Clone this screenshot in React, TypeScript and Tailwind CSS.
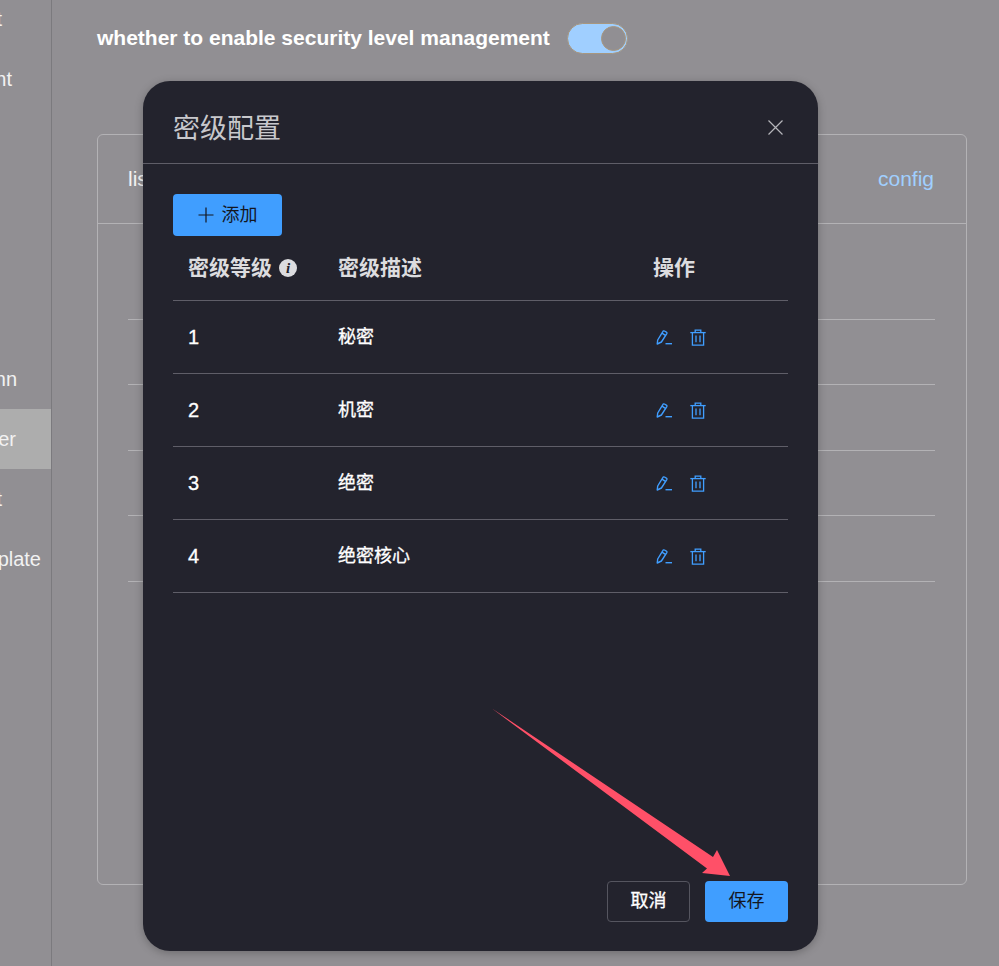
const FONT = "font-['Liberation_Sans','Noto_Sans_CJK_SC',sans-serif]";

const sideItems = [
  { label: "Project list", right: 49, active: false },
  { label: "Agent management", right: 39, active: false },
  { label: "", right: 0, active: false },
  { label: "", right: 0, active: false },
  { label: "", right: 0, active: false },
  { label: "", right: 0, active: false },
  { label: "Data conn", right: 34, active: false },
  { label: "Cipher", right: 35, active: true },
  { label: "Audit", right: 49, active: false },
  { label: "Template", right: 10, active: false },
];

const levels = [
  { level: "1", desc: "秘密" },
  { level: "2", desc: "机密" },
  { level: "3", desc: "绝密" },
  { level: "4", desc: "绝密核心" },
];

function EditIcon() {
  return (
    <svg width="16" height="16" viewBox="0 0 16 16" fill="none" stroke="#409eff" strokeWidth="1.4">
      <path d="M1.2 15 1.7 11 7 2.4a1 1 0 0 1 1.4-.4l2 1.2a1 1 0 0 1 .4 1.4L5.4 13z" strokeLinejoin="round" />
      <path d="M6 4.2 9.8 6.6" />
      <path d="M9.5 14.7H16" />
    </svg>
  );
}

function DeleteIcon() {
  return (
    <svg width="16" height="17" viewBox="0 0 16 17" fill="none" stroke="#409eff" strokeWidth="1.3">
      <path d="M5.2 3.5V1.2h5.6v2.3" />
      <path d="M0.3 3.6h15.4" />
      <path d="M2.4 3.6v12.6h11.2V3.6" />
      <path d="M6 6.5v6.8M10 6.5v6.8" />
    </svg>
  );
}

function Sidebar() {
  return (
    <div className="w-[52px] shrink-0 border-r border-[#7b7a7e] -mt-[11px] overflow-hidden h-[977px]">
      {sideItems.map((item, i) => (
        <div
          key={i}
          className={`h-[60px] flex items-center justify-end whitespace-nowrap text-[20px] text-[#f2f2f2] ${
            item.active ? "bg-[#adadad]" : ""
          }`}
        >
          {item.label && <span style={{ marginRight: item.right }}>{item.label}</span>}
        </div>
      ))}
    </div>
  );
}

function Toggle() {
  return (
    <div className="w-[61px] h-[31px] rounded-full bg-[#a0cfff] border border-[#a8977f] flex items-center justify-end pr-[1px]">
      <div className="w-[25px] h-[25px] rounded-full bg-[#918f93] border border-[#a8977f]" />
    </div>
  );
}

function Modal() {
  return (
    <div className="absolute left-[143px] top-[81px] w-[675px] h-[870px] rounded-[27px] bg-[#23232d] flex flex-col shadow-[0_2px_8px_rgba(0,0,0,0.25)]">
      <div className="h-[83px] shrink-0 border-b border-[#5f5e68] flex items-center justify-between pl-[30px] pr-[35px]">
        <span className="text-[27px] text-[#c8c8cc] mt-[14px]">密级配置</span>
        <svg className="mt-[10px]" width="15" height="15" viewBox="0 0 15 15" stroke="#b5b5ba" strokeWidth="1.2">
          <path d="M0.5 0.5 14.5 14.5M14.5 0.5 0.5 14.5" />
        </svg>
      </div>

      <div className="flex-1 flex flex-col px-[30px] pt-[30px] pb-[29px]">
        <button className="w-[109px] h-[42px] rounded-[4px] bg-[#409eff] text-[#14171f] text-[18px] flex items-center justify-center gap-[8px]">
          <svg width="16" height="16" viewBox="0 0 16 16" stroke="#14171f" strokeWidth="1.2">
            <path d="M8 0.5v15M0.5 8h15" />
          </svg>
          添加
        </button>

        <div className="flex h-[65px] items-center border-b border-[#5f5e68] text-[21px] font-bold text-[#dcdcdf]">
          <div className="w-[165px] pl-[15px] flex items-center gap-[7px]">
            密级等级
            <span className="w-[18px] h-[18px] rounded-full bg-[#dcdcdf] text-[#23232d] text-[15px] leading-none flex items-center justify-center italic font-['Liberation_Serif',serif]">
              i
            </span>
          </div>
          <div className="w-[300px]">密级描述</div>
          <div className="w-[150px] pl-[15px]">操作</div>
        </div>

        {levels.map((row) => (
          <div key={row.level} className="flex h-[73px] items-center border-b border-[#5f5e68] text-white">
            <div className="w-[165px] pl-[15px] text-[20px] [-webkit-text-stroke:0.3px_white]">{row.level}</div>
            <div className="w-[300px] text-[18px] [-webkit-text-stroke:0.3px_white]">{row.desc}</div>
            <div className="w-[150px] pl-[18px] flex items-center gap-[18px]">
              <EditIcon />
              <DeleteIcon />
            </div>
          </div>
        ))}

        <div className="mt-auto flex justify-end gap-[15px]">
          <button className="w-[83px] h-[41px] rounded-[4px] border border-[#55555f] text-white text-[18px] [-webkit-text-stroke:0.3px_white]">取消</button>
          <button className="w-[83px] h-[41px] rounded-[4px] bg-[#409eff] text-[#14171f] text-[18px]">保存</button>
        </div>
      </div>
    </div>
  );
}

export default function App() {
  return (
    <div className={`relative w-[999px] h-[966px] overflow-hidden bg-[#918f93] flex ${FONT}`}>
      <Sidebar />

      <div className="flex-1 pl-[45px] pr-[32px] pt-[23px]">
        <div className="flex items-center h-[30px] gap-[17px]">
          <span className="text-[21px] font-bold text-white whitespace-nowrap">whether to enable security level management</span>
          <Toggle />
        </div>

        <div className="mt-[81px] h-[751px] rounded-[6px] border border-[#b3b2b5]">
          <div className="h-[89px] flex items-center justify-between border-b border-[#b3b2b5] pl-[30px] pr-[32px] text-[21px]">
            <span className="text-[#f2f2f2]">list</span>
            <span className="text-[#a0cfff]">config</span>
          </div>
          <div className="pl-[30px] pr-[31px] pt-[95px] flex flex-col">
            <div className="h-px border-b border-[#b3b2b5]" />
            {[0, 1, 2, 3].map((i) => (
              <div key={i} className="h-[65.4px] border-b border-[#b3b2b5]" />
            ))}
          </div>
        </div>
      </div>

      <Modal />

      <svg className="absolute left-0 top-0 pointer-events-none" width="999" height="966" viewBox="0 0 999 966">
        <polygon points="492,708.5 713,857 717,850 730,876 702,873 707,868.5" fill="#ff5068" />
      </svg>
    </div>
  );
}
